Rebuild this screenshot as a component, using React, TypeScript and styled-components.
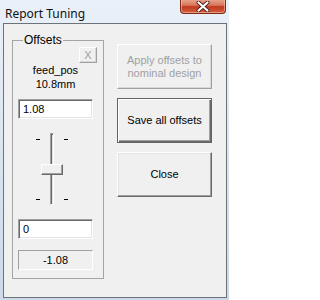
import styled, { createGlobalStyle } from 'styled-components';

const GlobalStyle = createGlobalStyle`
  html, body {
    margin: 0;
    padding: 0;
  }
  body {
    width: 229px;
    height: 300px;
    overflow: hidden;
    font-family: 'Liberation Sans', Arial, sans-serif;
  }
`;

const Window = styled.div`
  box-sizing: border-box;
  width: 229px;
  height: 300px;
  display: flex;
  flex-direction: column;
  padding: 0 2px 2px 3px;
  background: linear-gradient(180deg, #e9f0f8 0%, #dde7f3 40%, #cbd9ea 100%);
`;

const TitleBar = styled.div`
  height: 23px;
  display: flex;
  justify-content: space-between;
  align-items: flex-start;
  padding: 0 1px 0 2px;
  flex-shrink: 0;
`;

const Title = styled.span`
  font-family: 'Noto Sans', 'Open Sans', sans-serif;
  font-size: 12px;
  line-height: 16px;
  margin-top: 6px;
  color: #111;
`;

const CloseBox = styled.div`
  box-sizing: border-box;
  width: 46px;
  height: 15px;
  margin-top: -1px;
  border: 1px solid #7d2a1c;
  border-top: none;
  border-radius: 0 0 4px 4px;
  background: linear-gradient(180deg, #e9a893 0%, #d87559 45%, #c0391f 55%, #d4603f 100%);
  box-shadow: inset 0 0 0 1px rgba(255, 210, 190, 0.5);
  display: flex;
  align-items: center;
  justify-content: center;
`;

const Client = styled.div`
  flex: 1;
  display: flex;
  align-items: flex-start;
  background: #f0f0f0;
  border: 1px solid #6e7378;
  padding: 10px 0 0 8px;
`;

const Group = styled.fieldset`
  box-sizing: border-box;
  width: 92px;
  margin: 0;
  padding: 0 10px 8px 5px;
  min-width: 0;
  border: 1px solid #a4a4a4;
  display: flex;
  flex-direction: column;
`;

const Legend = styled.legend`
  font-size: 12px;
  line-height: 13px;
  padding: 0 1px;
  margin-left: 5px;
  color: #000;
`;

const SmallButton = styled.div`
  box-sizing: border-box;
  align-self: flex-end;
  width: 18px;
  height: 16px;
  margin-right: -4px;
  border: 1px solid;
  border-color: #fff #a0a0a0 #a0a0a0 #fff;
  box-shadow: inset -1px -1px 0 #d8d8d8;
  font-size: 11px;
  line-height: 14px;
  text-align: center;
  color: #a0a0a0;
`;

const Caption = styled.div`
  font-size: 11px;
  line-height: 14px;
  text-align: center;
  color: #000;
  &:first-of-type {
    margin-top: 4px;
  }
`;

const TextBox = styled.div<{ $top: number }>`
  box-sizing: border-box;
  height: 20px;
  margin-top: ${(p) => p.$top}px;
  border: 1px solid;
  border-color: #a0a0a0 #fff #fff #a0a0a0;
  box-shadow: inset 1px 1px 0 #696969, inset -1px -1px 0 #e3e3e3;
  background: #fff;
  font-size: 11px;
  line-height: 18px;
  padding-left: 4px;
  color: #000;
`;

const Static = styled.div`
  box-sizing: border-box;
  height: 20px;
  margin-top: 11px;
  border: 1px solid;
  border-color: #a0a0a0 #fff #fff #a0a0a0;
  font-size: 11px;
  line-height: 18px;
  text-align: center;
  color: #000;
`;

const Slider = styled.div`
  position: relative;
  width: 34px;
  height: 100px;
  margin-left: 17px;
`;

const Track = styled.div`
  position: absolute;
  left: 15px;
  top: 14px;
  width: 4px;
  height: 72px;
  box-sizing: border-box;
  border: 1px solid;
  border-color: #a0a0a0 #fff #fff #a0a0a0;
  box-shadow: inset 1px 1px 0 #696969, inset -1px -1px 0 #e3e3e3;
  background: #e3e3e3;
`;

const Thumb = styled.div`
  position: absolute;
  left: 6px;
  top: 45px;
  width: 22px;
  height: 11px;
  box-sizing: border-box;
  border: 1px solid;
  border-color: #fff #696969 #696969 #fff;
  box-shadow: inset -1px -1px 0 #a0a0a0;
  background: #f0f0f0;
`;

const Tick = styled.div<{ $x: number; $y: number }>`
  position: absolute;
  left: ${(p) => p.$x}px;
  top: ${(p) => p.$y}px;
  width: 4px;
  height: 1px;
  background: #000;
`;

const ButtonColumn = styled.div`
  display: flex;
  flex-direction: column;
  gap: 9px;
  width: 95px;
  margin: 10px 0 0 13px;
`;

const Button = styled.div<{ $disabled?: boolean; $default?: boolean }>`
  box-sizing: border-box;
  height: 45px;
  display: flex;
  align-items: center;
  justify-content: center;
  text-align: center;
  font-size: 11px;
  line-height: 13px;
  color: ${(p) => (p.$disabled ? '#a0a0a0' : '#000')};
  background: #f0f0f0;
  border: 1px solid;
  border-color: ${(p) =>
    p.$default ? '#646464' : p.$disabled ? '#fff #a0a0a0 #a0a0a0 #fff' : '#fff #696969 #696969 #fff'};
  box-shadow: ${(p) =>
    p.$default
      ? 'inset 1px 1px 0 #fff, inset -1px -1px 0 #696969, inset -2px -2px 0 #a0a0a0'
      : p.$disabled
        ? 'inset -1px -1px 0 #d8d8d8'
        : 'inset -1px -1px 0 #a0a0a0, inset 1px 1px 0 #e3e3e3'};
`;

export default function App() {
  return (
    <>
      <GlobalStyle />
      <Window>
        <TitleBar>
          <Title>Report Tuning</Title>
          <CloseBox>
            <svg width="14" height="11" viewBox="0 0 14 11">
              <path d="M2.5 1.5 L11.5 9.5 M11.5 1.5 L2.5 9.5" stroke="#4a2018" strokeWidth="4" strokeLinecap="round" />
              <path d="M2.5 1.5 L11.5 9.5 M11.5 1.5 L2.5 9.5" stroke="#fff" strokeWidth="2.2" strokeLinecap="round" />
            </svg>
          </CloseBox>
        </TitleBar>
        <Client>
          <Group>
            <Legend>Offsets</Legend>
            <SmallButton>X</SmallButton>
            <Caption>feed_pos</Caption>
            <Caption>10.8mm</Caption>
            <TextBox $top={8}>1.08</TextBox>
            <Slider>
              <Tick $x={1} $y={20} />
              <Tick $x={29} $y={20} />
              <Track />
              <Thumb />
              <Tick $x={1} $y={80} />
              <Tick $x={29} $y={80} />
            </Slider>
            <TextBox $top={0}>0</TextBox>
            <Static>-1.08</Static>
          </Group>
          <ButtonColumn>
            <Button $disabled>
              Apply offsets to
              <br />
              nominal design
            </Button>
            <Button $default>Save all offsets</Button>
            <Button>Close</Button>
          </ButtonColumn>
        </Client>
      </Window>
    </>
  );
}
